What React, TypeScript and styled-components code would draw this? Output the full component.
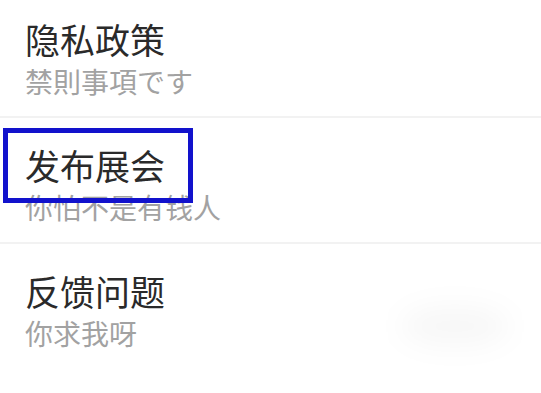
import styled, { createGlobalStyle } from 'styled-components'

const GlobalStyle = createGlobalStyle`
  html, body {
    margin: 0;
    padding: 0;
    background: #ffffff;
    overflow: hidden;
  }
  body {
    font-family: "Noto Sans CJK SC", "Noto Sans CJK JP", "Noto Sans", sans-serif;
  }
`

const items = [
  { title: '隐私政策', desc: '禁則事項です', lang: 'ja' },
  { title: '发布展会', desc: '你怕不是有钱人', highlight: true },
  { title: '反馈问题', desc: '你求我呀', smudge: true },
]

const App = () => {
  return (
    <>
      <GlobalStyle />
      <List>
        {items.map((item) => (
          <Row key={item.title}>
            <Title>{item.title}</Title>
            <Desc lang={item.lang}>{item.desc}</Desc>
            {item.highlight && <Highlight />}
            {item.smudge && <Smudge />}
          </Row>
        ))}
      </List>
    </>
  )
}

export default App

const List = styled.div`
  display: flex;
  flex-direction: column;
  margin-top: -8px;
  width: 541px;
`

const Row = styled.div`
  position: relative;
  height: 126px;
  box-sizing: border-box;
  padding: 27px 0 0 25px;
  border-bottom: 2px solid #f2f2f2;
  display: flex;
  flex-direction: column;

  &:last-child {
    border-bottom: none;
  }
`

const Title = styled.div`
  font-size: 35px;
  line-height: 40px;
  color: #2a2a2a;
  font-weight: 400;
`

const Desc = styled.div`
  font-size: 28px;
  line-height: 44px;
  color: #a2a2a2;
  font-family: ${(p) =>
    p.lang === 'ja'
      ? '"Noto Sans CJK JP", "Noto Sans CJK SC", sans-serif'
      : '"Noto Sans CJK SC", sans-serif'};
`

const Highlight = styled.div`
  position: absolute;
  left: 3px;
  top: 10px;
  width: 190px;
  height: 75px;
  box-sizing: border-box;
  border: 5px solid #1212cc;
`

const Smudge = styled.div`
  position: absolute;
  left: 400px;
  top: 62px;
  width: 110px;
  height: 40px;
  border-radius: 50%;
  background: rgba(0, 0, 0, 0.03);
  filter: blur(14px);
`
